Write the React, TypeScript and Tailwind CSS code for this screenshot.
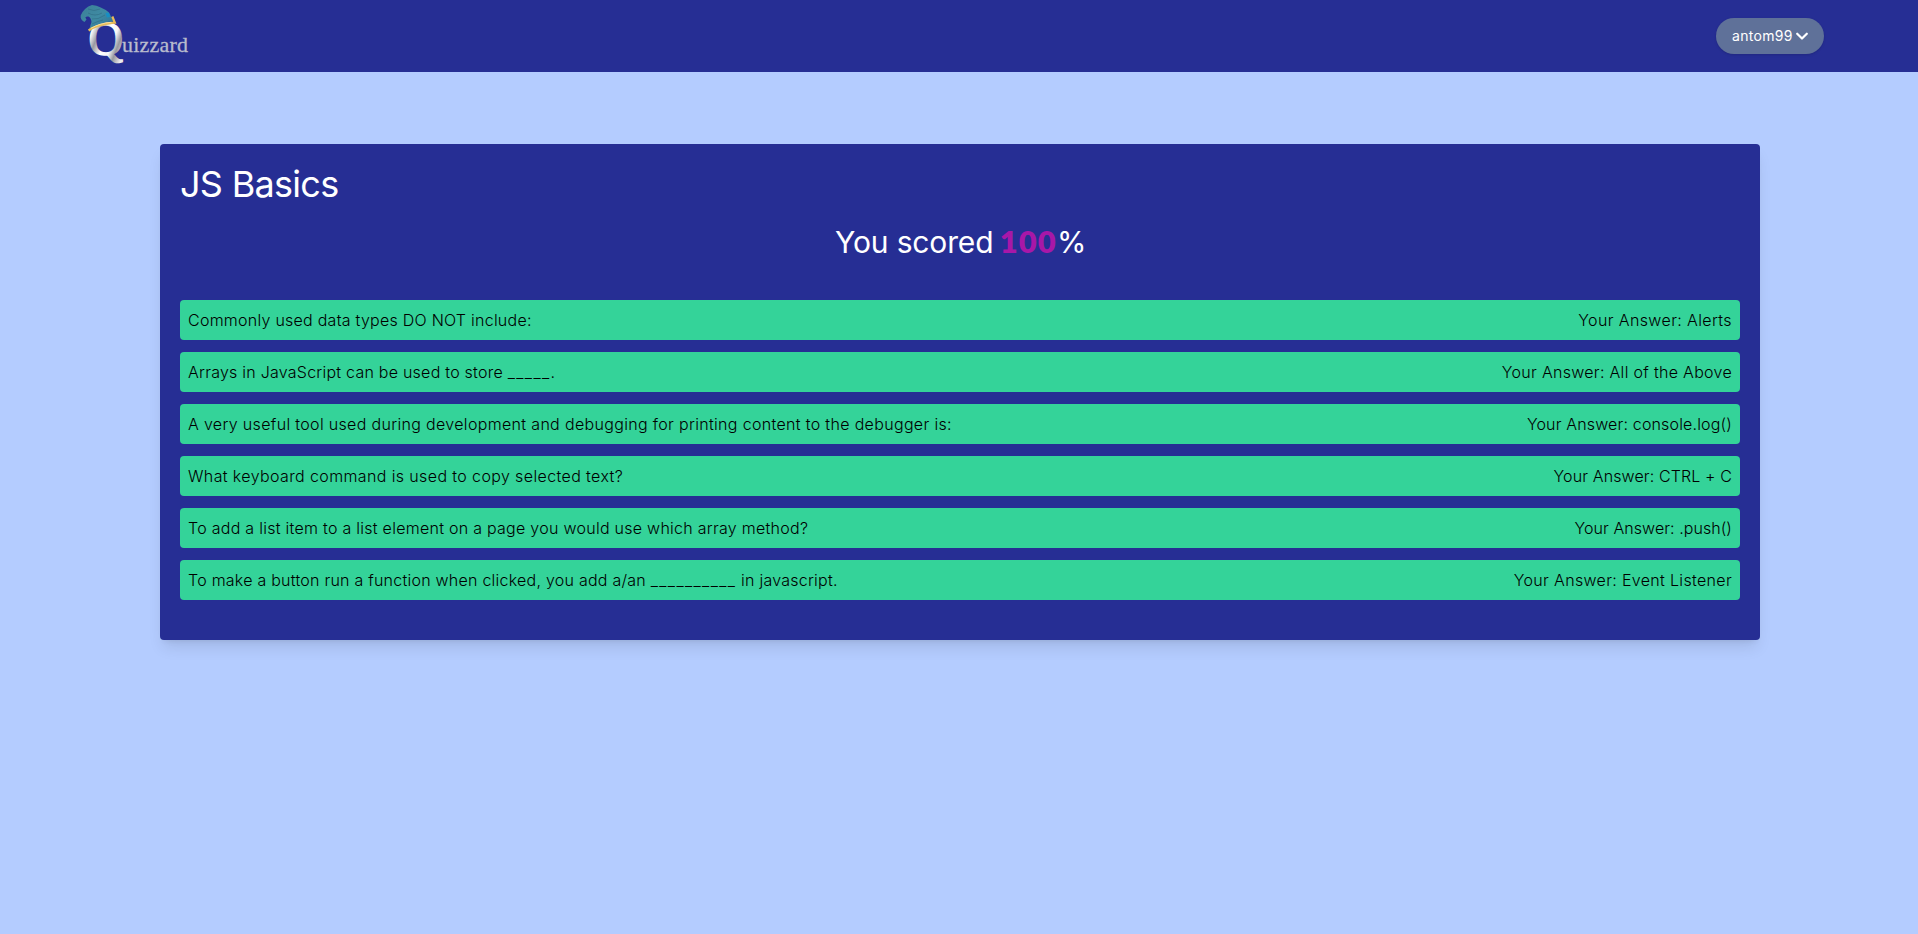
import type { ReactNode } from "react";

type Result = { question: ReactNode; answer: string; qTracking: string; aTracking: string };

function Blank({ children }: { children: string }) {
  return <span className="tracking-[1.4px]">{children}</span>;
}

const results: Result[] = [
  { question: "Commonly used data types DO NOT include:", answer: "Alerts", qTracking: "tracking-[0.25px]", aTracking: "tracking-[0.38px]" },
  { question: <>Arrays in JavaScript can be used to store <Blank>_____</Blank>.</>, answer: "All of the Above", qTracking: "tracking-[0.24px]", aTracking: "tracking-[0.3px]" },
  { question: "A very useful tool used during development and debugging for printing content to the debugger is:", answer: "console.log()", qTracking: "tracking-[0.33px]", aTracking: "tracking-[0.16px]" },
  { question: "What keyboard command is used to copy selected text?", answer: "CTRL + C", qTracking: "tracking-[0.38px]", aTracking: "tracking-[0.12px]" },
  { question: "To add a list item to a list element on a page you would use which array method?", answer: ".push()", qTracking: "tracking-[0.27px]", aTracking: "tracking-[0.06px]" },
  { question: <>To make a button run a function when clicked, you add a/an <Blank>__________</Blank> in javascript.</>, answer: "Event Listener", qTracking: "tracking-[0.24px]", aTracking: "tracking-[0.33px]" },
];

function Logo() {
  return (
    <svg width="120" height="72" viewBox="76 0 120 72" aria-label="Quizzard">
      <defs>
        <linearGradient id="silver" x1="0" y1="0.2" x2="1" y2="0.8">
          <stop offset="0" stopColor="#b4b4bc" />
          <stop offset="0.15" stopColor="#f8f8f8" />
          <stop offset="0.3" stopColor="#9898a0" />
          <stop offset="0.5" stopColor="#ffffff" />
          <stop offset="0.68" stopColor="#f6f6f6" />
          <stop offset="0.82" stopColor="#96969e" />
          <stop offset="1" stopColor="#ededf0" />
        </linearGradient>
        <linearGradient id="felt" x1="0" y1="0" x2="1" y2="1">
          <stop offset="0" stopColor="#3c7f97" />
          <stop offset="0.5" stopColor="#3f8ba3" />
          <stop offset="1" stopColor="#2b6f96" />
        </linearGradient>
      </defs>
      <text x="88.5" y="55" fontSize="48" fill="url(#silver)" stroke="url(#silver)" strokeWidth="1.6" textLength="34.5" lengthAdjust="spacingAndGlyphs" className="font-['Liberation_Serif',serif]">Q</text>
      <text x="122" y="52" fontSize="22" fill="#b9bccd" stroke="#b9bccd" strokeWidth="0.3" textLength="66" className="font-['Liberation_Serif',serif]">uizzard</text>
      <path d="M89 30 L91.5 22 Q91 17.5 88.5 16.5 Q86.5 16 85.3 17.5 L86.5 19.5 L84.5 22 Q80 19.5 80.7 15.5 Q84 7.5 92 5 Q101 6 109 12.5 L113.5 21.5 Q100 21.5 89 30Z" fill="url(#felt)" />
      <path d="M88 9 Q94 12 100 9 M88 13 Q95 17 102 13 M92 19 Q98 20 105 15 M92 24 Q98 21 103 20" stroke="#2c6880" strokeWidth="0.9" strokeOpacity="0.6" fill="none" />
      <path d="M105.5 13 L109 12.8 L110 17 L107 17.5Z" fill="#168fc4" />
      <path d="M88.6 30.5 Q98 23.8 114.8 22.6 L112.3 16.5" stroke="#e8bb58" strokeWidth="2.3" fill="none" />
      <path d="M91 28.3 Q99 23.4 111.5 22.2" stroke="#fff0ae" strokeWidth="0.7" fill="none" />
    </svg>
  );
}

export default function App() {
  return (
    <div className="min-h-screen bg-[#b4ccff] font-['Inter',sans-serif]">
      <header className="flex h-18 items-center justify-between bg-[#262e94] pr-[94px] pl-19">
        <Logo />
        <button className="flex h-9 w-27 items-center rounded-full bg-[#5f7199] pl-4 text-sm text-white shadow-sm">
          <span className="w-16 text-left tracking-[0.3px]">antom99</span>
          <svg width="12" height="12" viewBox="0 0 12 12" fill="none" stroke="currentColor" strokeWidth="2.2" strokeLinecap="round" strokeLinejoin="round">
            <path d="M1.2 3.7 L6 8.5 L10.8 3.7" />
          </svg>
        </button>
      </header>
      <main className="mt-18 ml-40 flex h-[496px] w-[1600px] flex-col rounded bg-[#262e94] px-5 pt-5 text-white shadow-lg">
        <h1 className="text-4xl leading-10 tracking-[-0.7px]">JS Basics</h1>
        <p className="mt-5 mb-10 h-9 pr-[2px] text-center text-3xl leading-9">
          <span className="tracking-[-0.15px]">You scored </span>
          <span className="-ml-[2px] font-['Lato',sans-serif] text-[31px] leading-8 font-extrabold tracking-[1.1px] text-[#a817a8]">100</span>
          <span className="inline-block w-[26px] tracking-tight">%</span>
        </p>
        <ul className="flex flex-col gap-3">
          {results.map((r) => (
            <li key={r.answer} className="flex h-10 items-center justify-between rounded bg-[#34d399] px-2 pb-px text-base font-light text-black">
              <span className={r.qTracking}>{r.question}</span>
              <span className={r.aTracking}>Your Answer: {r.answer}</span>
            </li>
          ))}
        </ul>
      </main>
    </div>
  );
}
